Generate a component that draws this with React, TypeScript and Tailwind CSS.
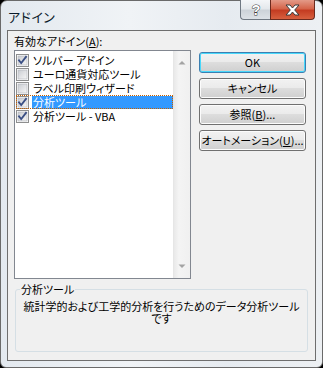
import React from "react";

function Check({ checked }: { checked: boolean }) {
  return (
    <svg width="13" height="13" viewBox="0 0 13 13" className="shrink-0">
      <defs>
        <linearGradient id="cbg" x1="0" y1="0" x2="1" y2="1">
          <stop offset="0" stopColor="#c9ccd1" />
          <stop offset="1" stopColor="#f7f7f7" />
        </linearGradient>
      </defs>
      <rect x="0.5" y="0.5" width="12" height="12" fill="#fff" stroke="#8e8f8f" />
      <rect x="2" y="2" width="9" height="9" fill="url(#cbg)" stroke="#aeb3b9" strokeWidth="0.6" />
      {checked && (
        <path d="M3 6.3 L5.2 9 L10 2.8" fill="none" stroke="#3a4f84" strokeWidth="1.8" strokeLinecap="square" />
      )}
    </svg>
  );
}

function Row({ text, checked, selected }: { text: string; checked: boolean; selected?: boolean }) {
  return (
    <div
      className={
        selected
          ? "h-[14px] flex items-center outline outline-1 outline-dotted outline-[#c66000] -outline-offset-1"
          : "h-[14px] flex items-center"
      }
    >
      <Check checked={checked} />
      <span
        className={
          selected
            ? "ml-[3px] flex-1 h-[13px] leading-[13px] pl-[1px] bg-[#3399ff] text-white whitespace-nowrap"
            : "ml-[3px] flex-1 h-[13px] leading-[13px] pl-[1px] text-black whitespace-nowrap"
        }
      >
        {text}
      </span>
    </div>
  );
}

function Btn({ children, def }: { children: React.ReactNode; def?: boolean }) {
  return (
    <div
      className={
        def
          ? "h-[21px] rounded-[3px] border border-[#3c7fb1] bg-[linear-gradient(#f2f2f2_0%,#ebebeb_45%,#dddddd_50%,#cfcfcf_100%)] shadow-[inset_0_0_0_1px_#48d8fb] flex items-center justify-center text-black"
          : "h-[21px] rounded-[3px] border border-[#707070] bg-[linear-gradient(#f2f2f2_0%,#ebebeb_45%,#dddddd_50%,#cfcfcf_100%)] shadow-[inset_0_0_0_1px_#fcfcfc] flex items-center justify-center text-black"
      }
    >
      {children}
    </div>
  );
}

export default function App() {
  return (
    <div className="w-[323px] h-[368px] bg-black font-['Noto_Sans_CJK_JP',sans-serif] [font-feature-settings:'palt'] text-[11px]">
      <div className="relative w-full h-full rounded-t-[7px] rounded-b-[6px] border border-[#6a6a6a] bg-[linear-gradient(90deg,#e3e9ef,#f0f3f6_40%,#e6ebf0_70%,#edf0f3)] flex flex-col">
        {/* title bar */}
        <div className="h-[29px] shrink-0 pl-[7px] flex items-center">
          <span className="text-[13px] text-[#0a1a2a] leading-none tracking-[0.5px] pt-[2px] [font-feature-settings:'normal']">アドイン</span>
        </div>
        <div className="absolute top-[-1px] right-[7px] flex">
          <div className="w-[30px] h-[20px] rounded-bl-[4px] border border-[#6f7882] border-t-0 border-r-0 bg-[linear-gradient(#f4f6f8_0%,#e4e8ec_45%,#cdd3d9_55%,#dde2e7_100%)] flex items-center justify-center">
            <svg width="12" height="14" viewBox="0 0 12 14">
              <text x="6" y="12" textAnchor="middle" fontSize="14" fontWeight="bold" fontFamily="Liberation Sans, sans-serif" fill="#ffffff" stroke="#3c3c3c" strokeWidth="1" paintOrder="stroke">?</text>
            </svg>
          </div>
          <div className="w-[45px] h-[20px] rounded-br-[4px] border border-[#6b2a1e] border-t-0 bg-[linear-gradient(#e39a88_0%,#d5654b_45%,#c43c22_55%,#d7603f_100%)] flex items-center justify-center">
            <svg width="17" height="12" viewBox="0 0 17 12">
              <path d="M2 1 H6 L8.5 4 L11 1 H15 L10.7 6 L15 11 H11 L8.5 8 L6 11 H2 L6.3 6 Z" fill="#ffffff" stroke="#3a3a3a" strokeWidth="1" strokeLinejoin="round" />
            </svg>
          </div>
        </div>
        {/* client */}
        <div className="mx-[6px] h-[331px] border border-[#6e6e6e] bg-[#f0f0f0] flex flex-col">
          <div className="flex">
            <div className="pl-[6px] pt-[3px] flex flex-col">
              <div className="h-[16px] leading-[14px] text-black whitespace-nowrap">
                有効なアドイン(<span className="underline underline-offset-1">A</span>):
              </div>
              <div className="w-[177px] h-[229px] border border-[#828790] bg-white flex">
                <div className="flex-1 pl-[1px] pt-[2px] flex flex-col">
                  <Row text="ソルバー アドイン" checked />
                  <Row text="ユーロ通貨対応ツール" checked={false} />
                  <Row text="ラベル印刷ウィザード" checked={false} />
                  <Row text="分析ツール" checked selected />
                  <Row text="分析ツール - VBA" checked />
                </div>
                <div className="w-[17px] border-l border-[#e6e6e6] bg-[linear-gradient(90deg,#e9e9e9,#f4f4f4_30%,#f0f0f0)] flex flex-col justify-between items-center py-[9px]">
                  <svg width="8" height="5" viewBox="0 0 8 5">
                    <path d="M0.5 4.5 L4 1 L7.5 4.5 Z" fill="#a3a3a3" />
                  </svg>
                  <svg width="8" height="5" viewBox="0 0 8 5">
                    <path d="M0.5 0.5 L4 4 L7.5 0.5 Z" fill="#a3a3a3" />
                  </svg>
                </div>
              </div>
            </div>
            <div className="ml-[8px] mt-[21px] w-[107px] flex flex-col gap-[5px]">
              <Btn def>OK</Btn>
              <Btn>キャンセル</Btn>
              <Btn>
                参照(<span className="underline underline-offset-1">B</span>)...
              </Btn>
              <Btn>
                オートメーション(<span className="underline underline-offset-1">U</span>)...
              </Btn>
            </div>
          </div>
          <div className="relative ml-[7px] mt-[10px] w-[293px] h-[63px] rounded-[3px] border border-[#d5dfe5]">
            <span className="absolute left-[4px] top-[-8px] px-[1px] bg-[#f0f0f0] leading-[14px] text-black">分析ツール</span>
            <div className="pt-[10px] text-center leading-[12px] text-black">
              統計学的および工学的分析を行うためのデータ分析ツール
              <br />
              です
            </div>
          </div>
        </div>
      </div>
    </div>
  );
}
